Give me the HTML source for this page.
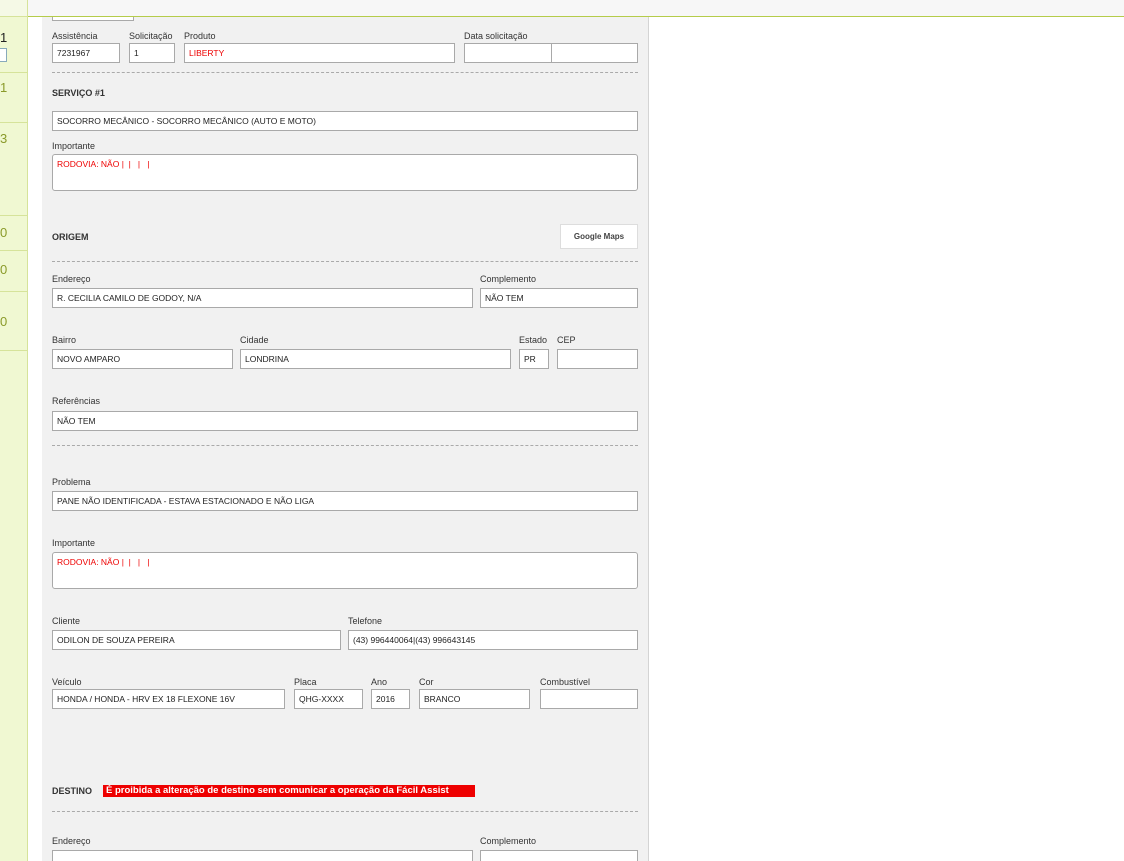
<!DOCTYPE html>
<html><head><meta charset="utf-8"><style>
html,body{margin:0;width:1124px;height:861px;overflow:hidden}
body{position:relative;background:#fff;font-family:"Liberation Sans",Arial,sans-serif;font-size:9px;color:#333}
.a{position:absolute}
.side{left:0;top:0;width:27px;height:861px;background:#f0f8d2;border-right:1px solid #d6e39a}
.top{left:28px;top:0;width:1096px;height:16px;background:#f7f7f7;border-bottom:1px solid #b5cc4a;z-index:2}
.topl{left:0;top:0;width:27px;height:16px;background:#f5f9e6;border-bottom:1px solid #d6e39a}
.panel{left:42px;top:17px;width:606px;height:844px;background:#f1f1f1;border-right:1px solid #d4d4d4}
.n{left:0;font-size:13px;color:#8a9a2a}
.hl{left:0;width:27px;height:1px;background:#d6e39a}
.l{font-size:9px;color:#333}
.i{background:#fff;border:1px solid #a9a9a9;box-sizing:border-box;height:20px;font-size:8.5px;padding:4px 0 0 4px;white-space:nowrap;overflow:hidden;color:#222}
.ta{height:37px;border-radius:3px}
.d{left:52px;width:586px;border-top:1px dashed #aaa;height:0}
.h{font-weight:bold;font-size:9px;color:#333}
</style></head><body>
<div class="a side"></div><div class="a topl"></div>
<div class="a top"></div>
<div class="a n" style="top:30px;color:#222">1</div>
<div class="a" style="left:0;top:48px;width:7px;height:14px;background:#fff;border:1px solid #8ab;border-left:none;box-sizing:border-box"></div>
<div class="a hl" style="top:72px"></div>
<div class="a n" style="top:80px">1</div>
<div class="a hl" style="top:122px"></div>
<div class="a n" style="top:131px">3</div>
<div class="a hl" style="top:215px"></div>
<div class="a n" style="top:225px">0</div>
<div class="a hl" style="top:250px"></div>
<div class="a n" style="top:262px">0</div>
<div class="a hl" style="top:291px"></div>
<div class="a n" style="top:314px">0</div>
<div class="a hl" style="top:350px"></div>
<div class="a panel"></div>

<div class="a i" style="left:52px;top:1px;width:82px"></div>
<div class="a l" style="left:52px;top:31px">Assistência</div>
<div class="a l" style="left:129px;top:31px">Solicitação</div>
<div class="a l" style="left:184px;top:31px">Produto</div>
<div class="a l" style="left:464px;top:31px">Data solicitação</div>
<div class="a i" style="left:52px;top:43px;width:68px">7231967</div>
<div class="a i" style="left:129px;top:43px;width:46px">1</div>
<div class="a i" style="left:184px;top:43px;width:271px;color:#e00">LIBERTY</div>
<div class="a i" style="left:464px;top:43px;width:88px"></div>
<div class="a i" style="left:551px;top:43px;width:87px"></div>
<div class="a d" style="top:72px"></div>
<div class="a h" style="left:52px;top:88px">SERVIÇO #1</div>
<div class="a i" style="left:52px;top:111px;width:586px">SOCORRO MECÂNICO - SOCORRO MECÂNICO (AUTO E MOTO)</div>
<div class="a l" style="left:52px;top:141px">Importante</div>
<div class="a i ta" style="left:52px;top:154px;width:586px;color:#e00">RODOVIA: NÃO |&nbsp; |&nbsp;&nbsp; |&nbsp;&nbsp; |</div>
<div class="a h" style="left:52px;top:232px">ORIGEM</div>
<div class="a" style="left:560px;top:224px;width:78px;height:25px;background:#fff;border:1px solid #ddd;box-sizing:border-box;font-weight:bold;font-size:8px;text-align:center;line-height:23px;color:#444">Google Maps</div>
<div class="a d" style="top:261px"></div>
<div class="a l" style="left:52px;top:274px">Endereço</div>
<div class="a l" style="left:480px;top:274px">Complemento</div>
<div class="a i" style="left:52px;top:288px;width:421px">R. CECILIA CAMILO DE GODOY, N/A</div>
<div class="a i" style="left:480px;top:288px;width:158px">NÃO TEM</div>
<div class="a l" style="left:52px;top:335px">Bairro</div>
<div class="a l" style="left:240px;top:335px">Cidade</div>
<div class="a l" style="left:519px;top:335px">Estado</div>
<div class="a l" style="left:557px;top:335px">CEP</div>
<div class="a i" style="left:52px;top:349px;width:181px">NOVO AMPARO</div>
<div class="a i" style="left:240px;top:349px;width:271px">LONDRINA</div>
<div class="a i" style="left:519px;top:349px;width:30px">PR</div>
<div class="a i" style="left:557px;top:349px;width:81px"></div>
<div class="a l" style="left:52px;top:396px">Referências</div>
<div class="a i" style="left:52px;top:411px;width:586px">NÃO TEM</div>
<div class="a d" style="top:445px"></div>
<div class="a l" style="left:52px;top:477px">Problema</div>
<div class="a i" style="left:52px;top:491px;width:586px">PANE NÃO IDENTIFICADA - ESTAVA ESTACIONADO E NÃO LIGA</div>
<div class="a l" style="left:52px;top:538px">Importante</div>
<div class="a i ta" style="left:52px;top:552px;width:586px;color:#e00">RODOVIA: NÃO |&nbsp; |&nbsp;&nbsp; |&nbsp;&nbsp; |</div>
<div class="a l" style="left:52px;top:616px">Cliente</div>
<div class="a l" style="left:348px;top:616px">Telefone</div>
<div class="a i" style="left:52px;top:630px;width:289px">ODILON DE SOUZA PEREIRA</div>
<div class="a i" style="left:348px;top:630px;width:290px">(43) 996440064|(43) 996643145</div>
<div class="a l" style="left:52px;top:677px">Veículo</div>
<div class="a l" style="left:294px;top:677px">Placa</div>
<div class="a l" style="left:371px;top:677px">Ano</div>
<div class="a l" style="left:419px;top:677px">Cor</div>
<div class="a l" style="left:540px;top:677px">Combustível</div>
<div class="a i" style="left:52px;top:689px;width:233px">HONDA / HONDA - HRV EX 18 FLEXONE 16V</div>
<div class="a i" style="left:294px;top:689px;width:69px">QHG-XXXX</div>
<div class="a i" style="left:371px;top:689px;width:39px">2016</div>
<div class="a i" style="left:419px;top:689px;width:111px">BRANCO</div>
<div class="a i" style="left:540px;top:689px;width:98px"></div>
<div class="a h" style="left:52px;top:786px">DESTINO</div>
<div class="a" style="left:103px;top:785px;width:372px;height:12px;background:#e00;color:#fff;font-weight:bold;font-size:9.5px;line-height:12px;padding-left:3px;box-sizing:border-box;white-space:nowrap;overflow:hidden">É proibida a alteração de destino sem comunicar a operação da Fácil Assist</div>
<div class="a d" style="top:811px"></div>
<div class="a l" style="left:52px;top:836px">Endereço</div>
<div class="a l" style="left:480px;top:836px">Complemento</div>
<div class="a i" style="left:52px;top:850px;width:421px"></div>
<div class="a i" style="left:480px;top:850px;width:158px"></div>
</body></html>
